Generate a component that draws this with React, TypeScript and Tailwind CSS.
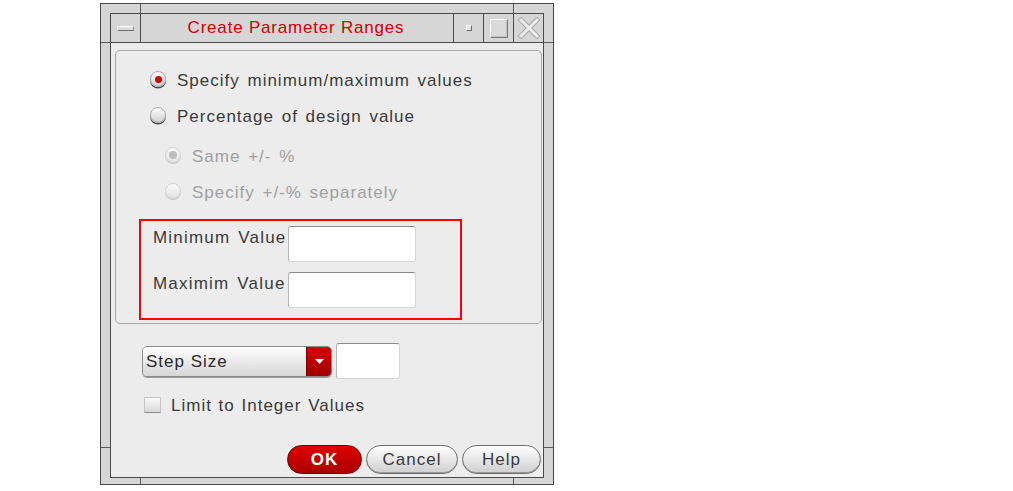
import React from "react";

const font = { fontFamily: '"Liberation Sans", Arial, sans-serif' };

const Radio = ({ checked, disabled }: { checked?: boolean; disabled?: boolean }) => (
  <span
    className={`flex items-center justify-center w-4 h-4 rounded-full border bg-gradient-to-b ${
      disabled
        ? "border-[#d0d0d0] from-[#fafafa] to-[#e2e2e2] shadow-[0_1px_0_#c4c4c4]"
        : "border-[#a8a8a8] from-white to-[#cfcfcf] shadow-[0_1.5px_0_#4a4a4a]"
    }`}
  >
    {checked && (
      <span
        className={`rounded-full ${
          disabled ? "w-[8px] h-[8px] bg-[#bdbdbd]" : "w-[7px] h-[7px] bg-[#d40000]"
        }`}
      />
    )}
  </span>
);

const RadioRow = ({
  label,
  checked,
  disabled,
  indent,
}: {
  label: string;
  checked?: boolean;
  disabled?: boolean;
  indent: string;
}) => (
  <div className={`flex items-center h-[36px] ${indent}`}>
    <Radio checked={checked} disabled={disabled} />
    <span
      className={`ml-[11px] pt-[3px] text-[17px] tracking-[1px] [word-spacing:2px] ${
        disabled ? "text-[#a0a0a0]" : "text-[#3a3a3a]"
      }`}
    >
      {label}
    </span>
  </div>
);

const Field = ({ className }: { className: string }) => (
  <div
    className={`bg-white rounded-[3px] border border-[#d6d6d6] border-t-[#8c8c8c] border-l-[#b4b4b4] ${className}`}
  />
);

const ValueRow = ({ label, className = "" }: { label: string; className?: string }) => (
  <div className={`flex items-start ${className}`}>
    <span className="w-[135px] pt-[2px] text-[17px] leading-[20px] tracking-[1.2px] [word-spacing:2px] text-[#3a3a3a]">
      {label}
    </span>
    <Field className="w-[128px] h-[36px]" />
  </div>
);

const PillButton = ({ label, width }: { label: string; width: string }) => (
  <button
    className={`${width} h-[29px] rounded-full border border-[#6e6e6e] bg-gradient-to-b from-white to-[#cfcfcf] text-[17px] tracking-[1px] text-[#3a3a3a] shadow-[inset_0_-1px_0_#9a9a9a]`}
  >
    {label}
  </button>
);

export default function App() {
  return (
    <div className="w-full h-[491px] bg-white pl-[100px] pt-[3px]" style={font}>
      <div className="relative w-[454px] h-[482px] border border-[#4a4a4a] bg-[#d6d6d6] pt-[9px] px-[9px] pb-[6px]">
        {/* resize handle ticks on the frame */}
        <div className="absolute left-[39px] top-0 w-px h-[9px] bg-[#5a5a5a]" />
        <div className="absolute left-[412px] top-0 w-px h-[9px] bg-[#5a5a5a]" />
        <div className="absolute left-[39px] bottom-0 w-px h-[6px] bg-[#5a5a5a]" />
        <div className="absolute left-[412px] bottom-0 w-px h-[6px] bg-[#5a5a5a]" />
        <div className="absolute left-0 top-[38px] w-[9px] h-px bg-[#5a5a5a]" />
        <div className="absolute right-0 top-[38px] w-[9px] h-px bg-[#5a5a5a]" />
        <div className="absolute left-0 top-[443px] w-[9px] h-px bg-[#5a5a5a]" />
        <div className="absolute right-0 top-[443px] w-[9px] h-px bg-[#5a5a5a]" />

        <div className="h-full border border-[#4a4a4a] flex flex-col">
          {/* title bar */}
          <div className="flex h-[29px] border-b border-[#4a4a4a] bg-[#d6d6d6]">
            <div className="w-[30px] border-r border-[#4a4a4a] flex items-center justify-center">
              <div className="w-[17px] h-[5px] bg-[#dcdcdc] border-t border-l border-white border-b border-r border-b-[#707070] border-r-[#909090]" />
            </div>
            <div className="flex-1 flex items-center justify-center pr-[2px] text-[17px] tracking-[0.8px] text-[#d00000]">
              Create Parameter Ranges
            </div>
            <div className="w-[30px] border-l border-[#4a4a4a] flex items-center justify-center">
              <div className="w-[6px] h-[6px] bg-[#e4e4e4] border border-t-white border-l-white border-b-[#6a6a6a] border-r-[#6a6a6a]" />
            </div>
            <div className="w-[30px] border-l border-[#4a4a4a] flex items-center justify-center">
              <div className="w-[18px] h-[19px] bg-[#dadada] border border-t-white border-l-white border-b-[#7a7a7a] border-r-[#7a7a7a] shadow-[inset_-1px_-1px_0_#c0c0c0]" />
            </div>
            <div className="w-[30px] border-l border-[#4a4a4a] flex items-center justify-center">
              <svg width="22" height="22" viewBox="0 0 22 22">
                <path d="M3 3 L19 19 M19 3 L3 19" stroke="#a6a6a6" strokeWidth="5" strokeLinecap="square" />
                <path d="M3 3 L19 19 M19 3 L3 19" stroke="#ececec" strokeWidth="3" strokeLinecap="square" />
              </svg>
            </div>
          </div>

          {/* content */}
          <div className="flex-1 bg-[#ececec] flex flex-col">
            <div className="ml-[4px] mr-[1px] mt-[7px] h-[274px] border border-[#a9a9a9] rounded-[5px] pt-[10px] pb-[3px] flex flex-col">
              <RadioRow label="Specify minimum/maximum values" checked indent="pl-[34px]" />
              <RadioRow label="Percentage of design value" indent="pl-[34px]" />
              <div className="mt-[4px]">
                <RadioRow label="Same +/- %" checked disabled indent="pl-[49px]" />
                <RadioRow label="Specify +/-% separately" disabled indent="pl-[49px]" />
              </div>
              <div className="mt-[10px] ml-[23px] w-[323px] h-[101px] border-2 border-[#ff0000] pt-[5px] pl-[12px]">
                <ValueRow label="Minimum Value" />
                <ValueRow label="Maximim Value" className="mt-[10px]" />
              </div>
            </div>

            <div className="mt-[19px] h-[36px] flex items-center pl-[31px] gap-[4px]">
              <div className="w-[190px] h-[31px] flex rounded-[5px] border border-[#8a8a8a] overflow-hidden shadow-[0_1px_0_#9a9a9a]">
                <div className="flex-1 flex items-center pl-[3px] pt-[1px] bg-gradient-to-b from-white to-[#d6d6d6] text-[17px] tracking-[1px] text-[#2a2a2a]">
                  Step Size
                </div>
                <div className="w-[25px] flex items-center justify-center bg-gradient-to-b from-[#d80000] to-[#a00000] border-l border-[#7a0000]">
                  <svg width="9" height="5" viewBox="0 0 9 5">
                    <path d="M0 0 H9 L4.5 5 Z" fill="#ffffff" />
                  </svg>
                </div>
              </div>
              <Field className="w-[64px] h-[36px]" />
            </div>

            <div className="mt-[16px] h-[20px] flex items-center pl-[33px]">
              <div className="w-[17px] h-[16px] border border-[#c4c4c4] border-b-[#8c8c8c] bg-gradient-to-b from-[#fafafa] to-[#d8d8d8]" />
              <span className="ml-[10px] pt-[1px] text-[17px] tracking-[1px] [word-spacing:1px] text-[#3a3a3a]">
                Limit to Integer Values
              </span>
            </div>

            <div className="mt-[30px] h-[29px] flex justify-end gap-[4px] pr-[2px]">
              <button className="w-[75px] h-[29px] rounded-full border border-[#6a0000] bg-gradient-to-b from-[#e00000] to-[#a80000] text-white font-bold text-[17px] tracking-[1px]">
                OK
              </button>
              <PillButton label="Cancel" width="w-[92px]" />
              <PillButton label="Help" width="w-[79px]" />
            </div>
          </div>
        </div>
      </div>
    </div>
  );
}
